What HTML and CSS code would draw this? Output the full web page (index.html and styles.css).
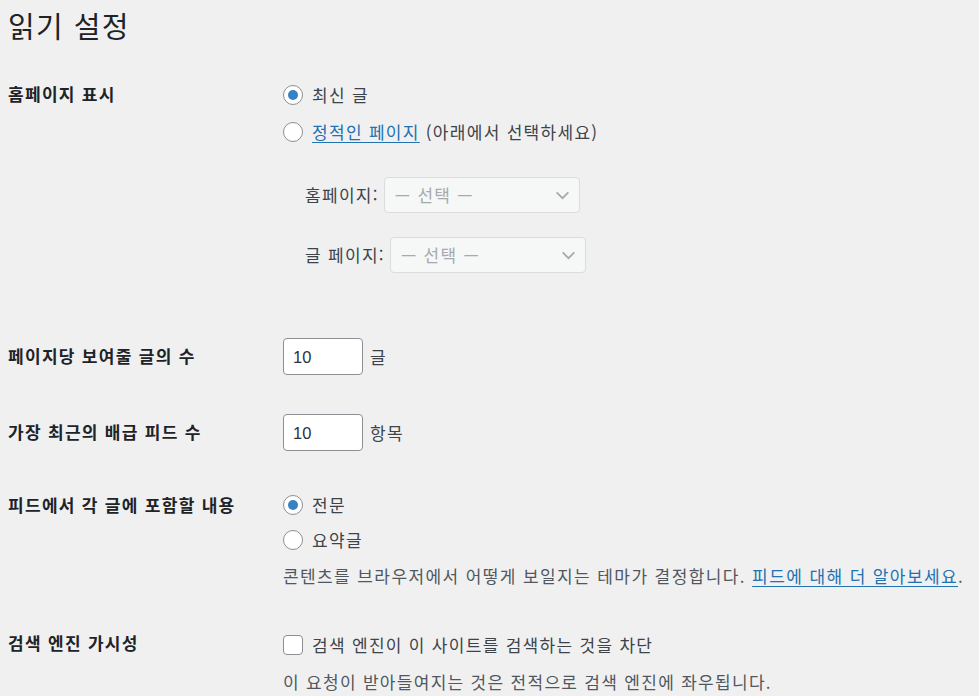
FILE: index.html
```html
<!DOCTYPE html>
<html lang="ko">
<head>
<meta charset="utf-8">
<title>읽기 설정</title>
<link rel="stylesheet" href="styles.css">
</head>
<body>
<div class="wrap">
  <h1 class="title">읽기 설정</h1>
  <form class="form">
    <div class="row row-front">
      <div class="th">홈페이지 표시</div>
      <div class="td">
        <label class="opt"><span class="radio checked"></span><span>최신 글</span></label>
        <label class="opt opt-2"><span class="radio"></span><span><a class="link" href="#">정적인 페이지</a> (아래에서 선택하세요)</span></label>
        <div class="pick pick-1">
          <span class="pick-label">홈페이지:</span>
          <span class="select"><span>— 선택 —</span>
            <svg class="chev" viewBox="0 0 16 10" width="15" height="9"><path d="M1.5 1.5 L8 8 L14.5 1.5" fill="none" stroke="#a7aaad" stroke-width="2"/></svg>
          </span>
        </div>
        <div class="pick pick-2">
          <span class="pick-label">글 페이지:</span>
          <span class="select"><span>— 선택 —</span>
            <svg class="chev" viewBox="0 0 16 10" width="15" height="9"><path d="M1.5 1.5 L8 8 L14.5 1.5" fill="none" stroke="#a7aaad" stroke-width="2"/></svg>
          </span>
        </div>
      </div>
    </div>

    <div class="row row-num row-posts">
      <div class="th th-input">페이지당 보여줄 글의 수</div>
      <div class="td inline">
        <span class="input">10</span><span class="unit">글</span>
      </div>
    </div>

    <div class="row row-num row-rss">
      <div class="th th-input">가장 최근의 배급 피드 수</div>
      <div class="td inline">
        <span class="input">10</span><span class="unit">항목</span>
      </div>
    </div>

    <div class="row row-feed">
      <div class="th">피드에서 각 글에 포함할 내용</div>
      <div class="td">
        <label class="opt"><span class="radio checked"></span><span>전문</span></label>
        <label class="opt opt-2b"><span class="radio"></span><span>요약글</span></label>
        <p class="desc desc-feed">콘텐츠를 브라우저에서 어떻게 보일지는 테마가 결정합니다. <a class="link" href="#">피드에 대해 더 알아보세요</a>.</p>
      </div>
    </div>

    <div class="row row-search">
      <div class="th th-search">검색 엔진 가시성</div>
      <div class="td">
        <label class="opt"><span class="checkbox"></span><span>검색 엔진이 이 사이트를 검색하는 것을 차단</span></label>
        <p class="desc desc-search">이 요청이 받아들여지는 것은 전적으로 검색 엔진에 좌우됩니다.</p>
      </div>
    </div>
  </form>
</div>
</body>
</html>
```
FILE: styles.css
```css
html, body {
  margin: 0;
  padding: 0;
  background: #f0f0f1;
}
body {
  font-family: "Noto Sans CJK KR", "Noto Sans", "Liberation Sans", sans-serif;
  color: #3c434a;
  font-size: 17px;
  letter-spacing: 1.3px;
  line-height: 24px;
  overflow: hidden;
}
.wrap {
  padding-left: 8px;
  width: 971px;
}
.title {
  margin: 7px 0 0;
  font-size: 29px;
  letter-spacing: 1.4px;
  line-height: 36px;
  font-weight: 400;
  color: #1d2327;
}
.row {
  display: grid;
  grid-template-columns: 275px 1fr;
  align-items: start;
}
.th {
  font-weight: 700;
  font-size: 17px;
  letter-spacing: 1.3px;
  color: #1d2327;
  line-height: 24px;
}
.td {
  display: flex;
  flex-direction: column;
  align-items: flex-start;
}
.opt {
  display: flex;
  align-items: center;
  gap: 9px;
  height: 24px;
  white-space: nowrap;
}
.radio, .checkbox {
  box-sizing: border-box;
  width: 20px;
  height: 20px;
  border: 1px solid #8c8f94;
  background: #fff;
  border-radius: 50%;
  display: flex;
  align-items: center;
  justify-content: center;
  flex: none;
}
.checkbox {
  border-radius: 4px;
}
.radio.checked::before {
  content: "";
  width: 10px;
  height: 10px;
  border-radius: 50%;
  background: #3582c4;
}
.link {
  color: #2271b1;
  text-decoration: underline;
  text-underline-offset: 3px;
}
.row-front {
  padding-top: 39px;
}
.row-front .td {
  padding-top: 1px;
}
.opt-2 {
  margin-top: 13px;
}
.pick {
  display: flex;
  align-items: center;
  padding-left: 22px;
  gap: 5px;
}
.pick-1 {
  margin-top: 33px;
}
.pick-2 {
  margin-top: 24px;
}
.pick-label {
  color: #3c434a;
}
.select {
  box-sizing: border-box;
  width: 196px;
  height: 36px;
  border: 1px solid #dcdcde;
  border-radius: 4px;
  background: #f6f7f7;
  color: #a7aaad;
  letter-spacing: 1.3px;
  display: flex;
  align-items: center;
  justify-content: space-between;
  padding: 0 9px 0 10px;
}
.chev {
  display: block;
}
.inline {
  flex-direction: row;
  align-items: center;
  gap: 7px;
}
.input {
  box-sizing: border-box;
  width: 80px;
  height: 37px;
  border: 1px solid #8c8f94;
  border-radius: 4px;
  background: #fff;
  color: #2c3338;
  font-family: "Liberation Sans", "Noto Sans", sans-serif;
  font-size: 16.5px;
  letter-spacing: 0;
  padding-left: 9px;
  display: flex;
  align-items: center;
}
.th-input {
  padding-top: 6px;
}
.row-posts {
  padding-top: 65px;
}
.row-rss {
  padding-top: 39px;
}
.row-feed {
  padding-top: 42px;
}
.opt-2b {
  margin-top: 11px;
}
.desc {
  margin: 0;
  color: #50575e;
  white-space: nowrap;
}
.desc-feed {
  margin-top: 12px;
  letter-spacing: 1.4px;
}
.row-search {
  padding-top: 45px;
}
.th-search {
  margin-top: -2px;
}
.desc-search {
  margin-top: 13px;
}
```
